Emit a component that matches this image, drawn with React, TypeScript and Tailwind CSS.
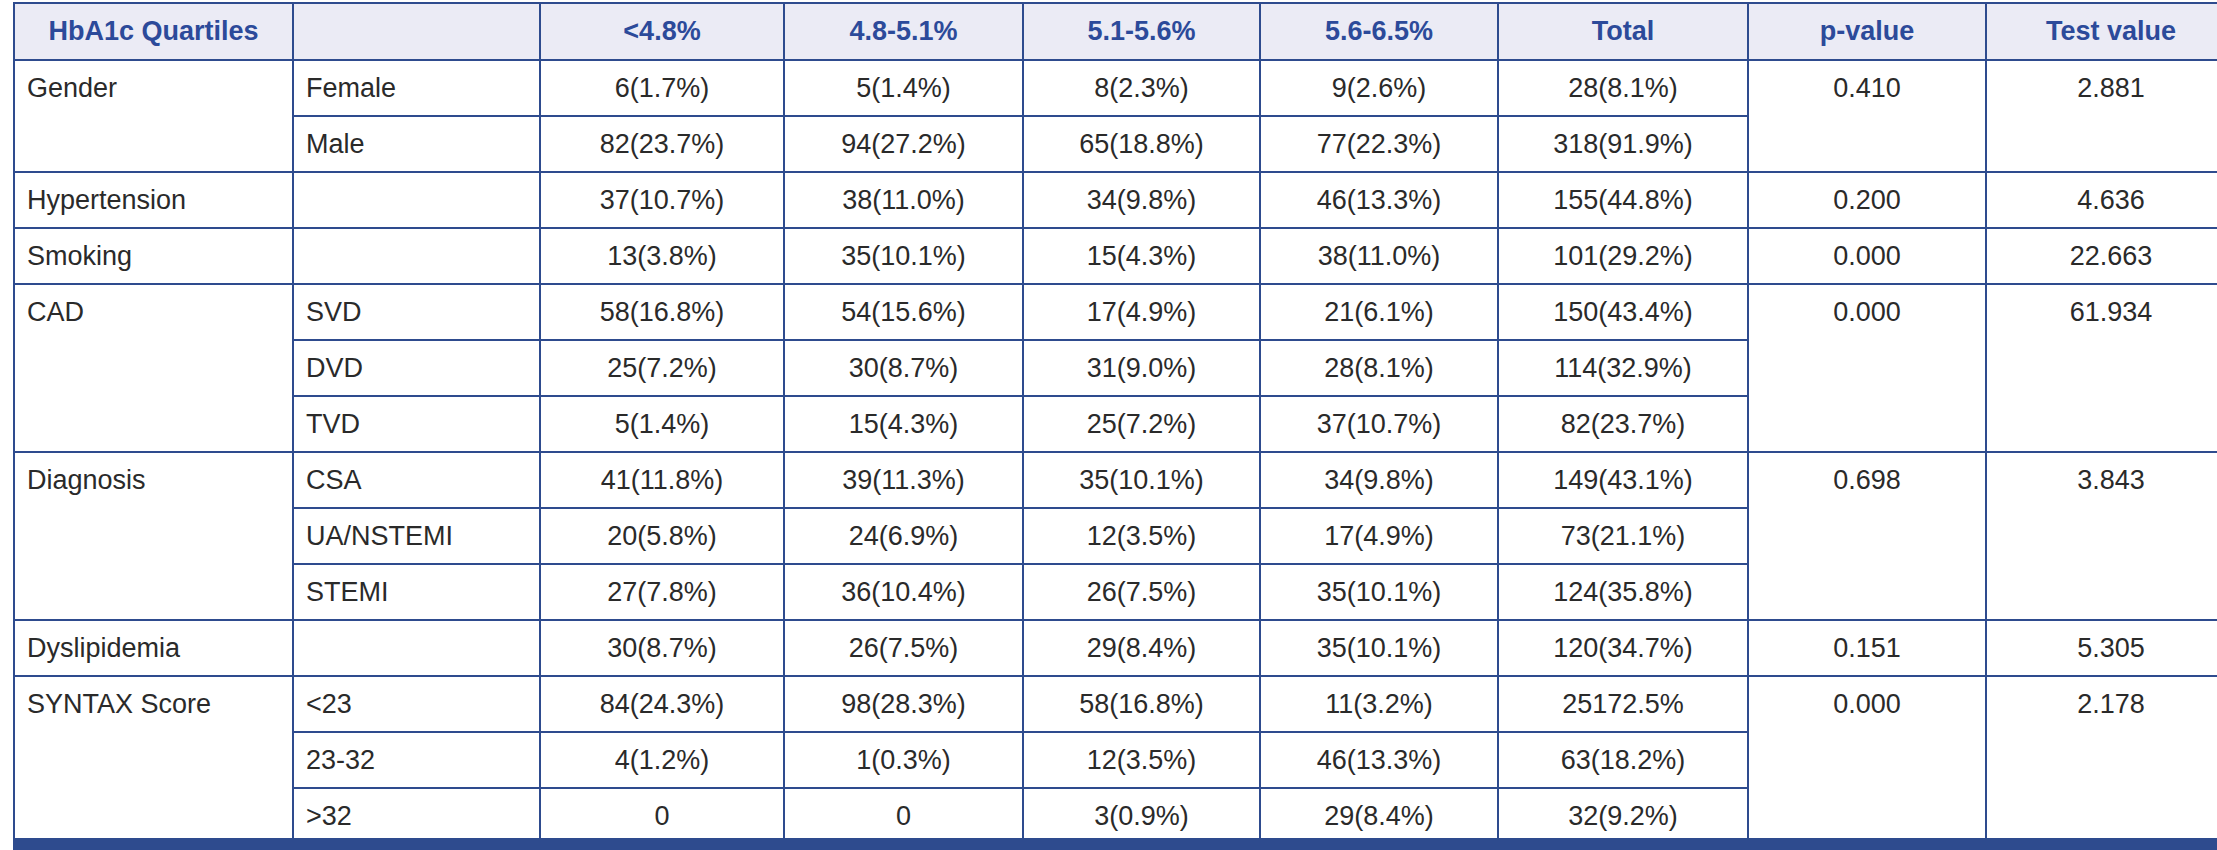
type Row = {
  group?: string;
  span?: number;
  sub: string;
  values: string[];
  p?: string;
  test?: string;
};

const rows: Row[] = [
  { group: "Gender", span: 2, sub: "Female", values: ["6(1.7%)", "5(1.4%)", "8(2.3%)", "9(2.6%)", "28(8.1%)"], p: "0.410", test: "2.881" },
  { sub: "Male", values: ["82(23.7%)", "94(27.2%)", "65(18.8%)", "77(22.3%)", "318(91.9%)"] },
  { group: "Hypertension", span: 1, sub: "", values: ["37(10.7%)", "38(11.0%)", "34(9.8%)", "46(13.3%)", "155(44.8%)"], p: "0.200", test: "4.636" },
  { group: "Smoking", span: 1, sub: "", values: ["13(3.8%)", "35(10.1%)", "15(4.3%)", "38(11.0%)", "101(29.2%)"], p: "0.000", test: "22.663" },
  { group: "CAD", span: 3, sub: "SVD", values: ["58(16.8%)", "54(15.6%)", "17(4.9%)", "21(6.1%)", "150(43.4%)"], p: "0.000", test: "61.934" },
  { sub: "DVD", values: ["25(7.2%)", "30(8.7%)", "31(9.0%)", "28(8.1%)", "114(32.9%)"] },
  { sub: "TVD", values: ["5(1.4%)", "15(4.3%)", "25(7.2%)", "37(10.7%)", "82(23.7%)"] },
  { group: "Diagnosis", span: 3, sub: "CSA", values: ["41(11.8%)", "39(11.3%)", "35(10.1%)", "34(9.8%)", "149(43.1%)"], p: "0.698", test: "3.843" },
  { sub: "UA/NSTEMI", values: ["20(5.8%)", "24(6.9%)", "12(3.5%)", "17(4.9%)", "73(21.1%)"] },
  { sub: "STEMI", values: ["27(7.8%)", "36(10.4%)", "26(7.5%)", "35(10.1%)", "124(35.8%)"] },
  { group: "Dyslipidemia", span: 1, sub: "", values: ["30(8.7%)", "26(7.5%)", "29(8.4%)", "35(10.1%)", "120(34.7%)"], p: "0.151", test: "5.305" },
  { group: "SYNTAX Score", span: 3, sub: "<23", values: ["84(24.3%)", "98(28.3%)", "58(16.8%)", "11(3.2%)", "25172.5%"], p: "0.000", test: "2.178" },
  { sub: "23-32", values: ["4(1.2%)", "1(0.3%)", "12(3.5%)", "46(13.3%)", "63(18.2%)"] },
  { sub: ">32", values: ["0", "0", "3(0.9%)", "29(8.4%)", "32(9.2%)"] },
];

const headers = ["HbA1c Quartiles", "", "<4.8%", "4.8-5.1%", "5.1-5.6%", "5.6-6.5%", "Total", "p-value", "Test value"];
const widths = [279, 247, 244, 239, 237, 238, 250, 238, 250];

const cell = "border-2 border-[#2e4b8e] align-top pt-[11px] leading-[32px]";

export default function App() {
  const last = rows.length - 1;
  return (
    <div className="w-[2217px] h-[850px] overflow-hidden bg-white pt-[2px] pl-[13px] font-['Liberation_Sans',Arial,sans-serif]">
      <table className="table-fixed border-collapse w-[2222px] text-[27px] text-[#2a2a2a]">
        <colgroup>
          {widths.map((w, i) => (
            <col key={i} style={{ width: w }} />
          ))}
        </colgroup>
        <thead>
          <tr className="h-[57px] bg-[#ebebf5]">
            {headers.map((h, i) => (
              <th key={i} className={`${cell} font-bold text-[#2c4a9a] text-center`}>
                {h}
              </th>
            ))}
          </tr>
        </thead>
        <tbody>
          {rows.map((r, i) => {
            const bottom = i + (r.span ?? 1) - 1 === last ? "border-b-[12px]" : "";
            const own = i === last ? "border-b-[12px]" : "";
            return (
              <tr key={i} className="h-[56px]">
                {r.group !== undefined && (
                  <td rowSpan={r.span} className={`${cell} ${bottom} pl-[12px] text-left`}>
                    {r.group}
                  </td>
                )}
                <td className={`${cell} ${own} pl-[12px] text-left`}>{r.sub}</td>
                {r.values.map((v, j) => (
                  <td key={j} className={`${cell} ${own} text-center`}>
                    {v}
                  </td>
                ))}
                {r.p !== undefined && (
                  <>
                    <td rowSpan={r.span} className={`${cell} ${bottom} text-center`}>
                      {r.p}
                    </td>
                    <td rowSpan={r.span} className={`${cell} ${bottom} text-center`}>
                      {r.test}
                    </td>
                  </>
                )}
              </tr>
            );
          })}
        </tbody>
      </table>
    </div>
  );
}
